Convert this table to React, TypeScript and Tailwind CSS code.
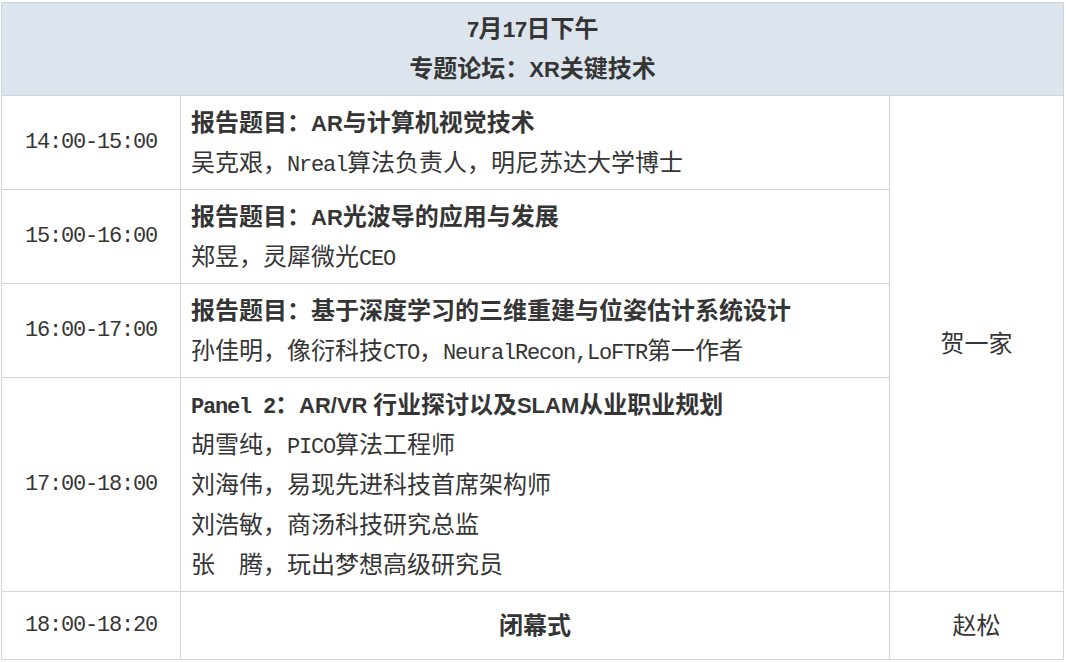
import React from "react";

const mono = "font-['Liberation_Mono',monospace] text-[22px] tracking-[-1.2px] leading-none";
const sansB = "font-['Liberation_Sans',sans-serif] text-[22px] font-bold leading-none";

function M({ children, bold }: { children: React.ReactNode; bold?: boolean }) {
  return <span className={mono + (bold ? " font-bold" : "")}>{children}</span>;
}
function B({ children }: { children: React.ReactNode }) {
  return <span className={sansB}>{children}</span>;
}

const cellBorder = "border border-[#d4d4d4]";

function TimeCell({ t }: { t: string }) {
  return (
    <td className={cellBorder + " text-center align-middle font-['Liberation_Mono',monospace] text-[22px] tracking-[-1.2px] leading-[40px] pt-[1px]"}>
      {t}
    </td>
  );
}

export default function App() {
  return (
    <div className="w-[1066px] h-[662px] bg-white pt-[2px] pl-[1px] font-['Noto_Sans_CJK_SC',sans-serif] text-[24px] leading-[40px] text-[#353535]">
      <table className="w-[1062px] table-fixed border-collapse">
        <colgroup>
          <col className="w-[179px]" />
          <col className="w-[709px]" />
          <col className="w-[174px]" />
        </colgroup>
        <tbody>
          <tr className="h-[93px]">
            <td colSpan={3} className="border border-[#cdd6df] bg-[#dce5ee] text-center align-middle font-bold pb-[4px]">
              <div>
                <M bold>7</M>月<M bold>17</M>日下午
              </div>
              <div>
                专题论坛：<B>XR</B>关键技术
              </div>
            </td>
          </tr>
          <tr className="h-[94px]">
            <TimeCell t="14:00-15:00" />
            <td className={cellBorder + " pl-[10px] align-middle pb-[3px]"}>
              <div className="font-bold">
                报告题目：<B>AR</B>与计算机视觉技术
              </div>
              <div>
                吴克艰，<M>Nreal</M>算法负责人，明尼苏达大学博士
              </div>
            </td>
            <td rowSpan={4} className={cellBorder + " text-center align-middle pb-[3px]"}>
              贺一家
            </td>
          </tr>
          <tr className="h-[94px]">
            <TimeCell t="15:00-16:00" />
            <td className={cellBorder + " pl-[10px] align-middle pb-[3px]"}>
              <div className="font-bold">
                报告题目：<B>AR</B>光波导的应用与发展
              </div>
              <div>
                郑昱，灵犀微光<M>CEO</M>
              </div>
            </td>
          </tr>
          <tr className="h-[94px]">
            <TimeCell t="16:00-17:00" />
            <td className={cellBorder + " pl-[10px] align-middle pb-[3px]"}>
              <div className="font-bold">报告题目：基于深度学习的三维重建与位姿估计系统设计</div>
              <div>
                孙佳明，像衍科技<M>CTO</M>，<M>NeuralRecon,LoFTR</M>第一作者
              </div>
            </td>
          </tr>
          <tr className="h-[214px]">
            <TimeCell t="17:00-18:00" />
            <td className={cellBorder + " pl-[10px] align-middle pb-[3px]"}>
              <div className="font-bold">
                <M bold>Panel 2</M>：<B>AR/VR</B> 行业探讨以及<B>SLAM</B>从业职业规划
              </div>
              <div>
                胡雪纯，<M>PICO</M>算法工程师
              </div>
              <div>刘海伟，易现先进科技首席架构师</div>
              <div>刘浩敏，商汤科技研究总监</div>
              <div>张　腾，玩出梦想高级研究员</div>
            </td>
          </tr>
          <tr className="h-[68px]">
            <TimeCell t="18:00-18:20" />
            <td className={cellBorder + " text-center align-middle font-bold pb-[3px]"}>闭幕式</td>
            <td className={cellBorder + " text-center align-middle pb-[3px]"}>赵松</td>
          </tr>
        </tbody>
      </table>
    </div>
  );
}
